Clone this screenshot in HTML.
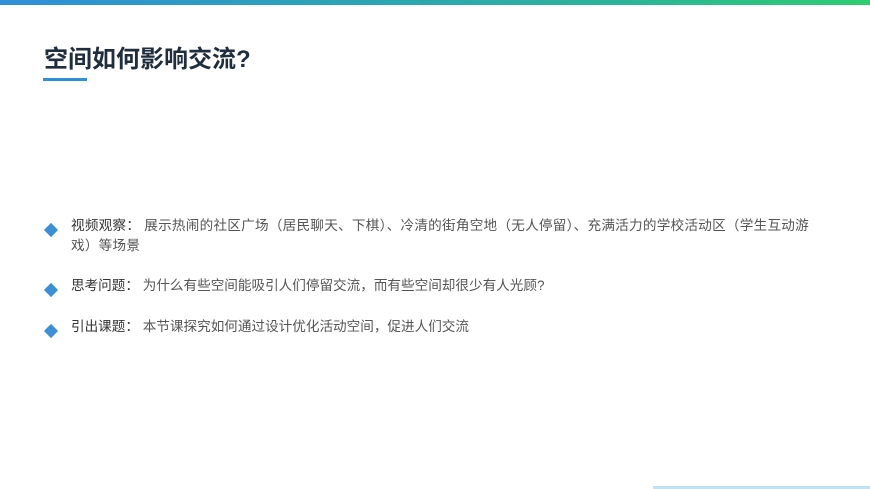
<!DOCTYPE html>
<html><head><meta charset="utf-8"><style>
body{margin:0;width:870px;height:489px;position:relative;background:#fff;overflow:hidden;font-family:"Liberation Sans","Noto Sans CJK SC",sans-serif}
.top{position:absolute;left:0;top:0;width:870px;height:5px;background:linear-gradient(90deg,#2f8fd8,#2bb39a 70%,#2ecc71)}
h1{position:absolute;left:44px;top:44px;margin:0;font-size:24px;line-height:32px;font-weight:bold;color:#1f2d3d}
.ul{position:absolute;left:43px;top:78px;width:44px;height:3px;background:#2f8fd8}
.item{position:absolute;left:71px;width:752px;font-size:13.6px;line-height:20px;color:#555}
.item b{font-weight:normal;color:#333}
.d{position:absolute;left:46px;width:10px;height:10px;background:#3a8fd6;transform:rotate(45deg)}
.bot{position:absolute;left:653px;top:486px;width:217px;height:3px;background:#bfe0f5}
</style></head><body>
<div class="top"></div>
<h1>空间如何影响交流?</h1>
<div class="ul"></div>
<div class="d" style="top:225px"></div>
<div class="item" style="top:216px;width:745px;letter-spacing:0.25px"><b>视频观察：</b> 展示热闹的社区广场（居民聊天、下棋）、冷清的街角空地（无人停留）、充满活力的学校活动区（学生互动游戏）等场景</div>
<div class="d" style="top:285px"></div>
<div class="item" style="top:276px"><b>思考问题：</b> 为什么有些空间能吸引人们停留交流，而有些空间却很少有人光顾?</div>
<div class="d" style="top:326px"></div>
<div class="item" style="top:317px"><b>引出课题：</b> 本节课探究如何通过设计优化活动空间，促进人们交流</div>
<div class="bot"></div>
</body></html>
